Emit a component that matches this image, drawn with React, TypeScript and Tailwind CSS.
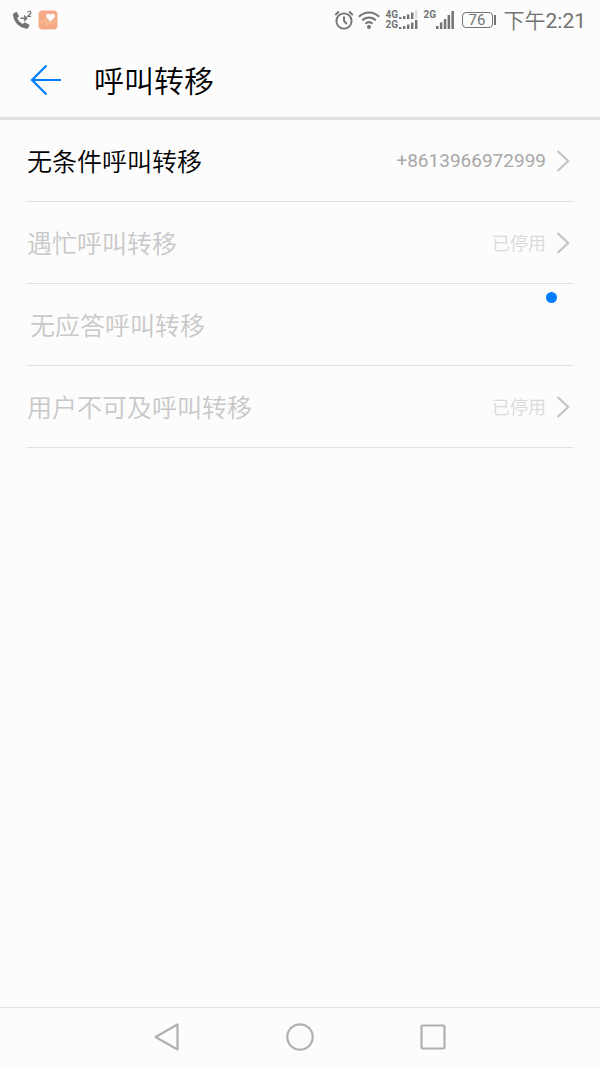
import { useState } from "react";

type ForwardingItem = {
  id: string;
  label: string;
  value?: string;
  enabled?: boolean;
  loading?: boolean;
};

const items: ForwardingItem[] = [
  { id: "always", label: "无条件呼叫转移", value: "+8613966972999", enabled: true },
  { id: "busy", label: "遇忙呼叫转移", value: "已停用" },
  { id: "no-answer", label: "无应答呼叫转移", loading: true },
  { id: "unreachable", label: "用户不可及呼叫转移", value: "已停用" },
];

export default function App() {
  const [selected, setSelected] = useState<string | null>(null);

  return (
    <div className="flex min-h-screen flex-col bg-[#fcfcfc] font-['Roboto','Noto_Sans_CJK_SC',sans-serif] font-[350] text-black">
      <StatusBar />

      <header className="flex h-20 items-center gap-8 border-b-3 border-[#e0e0e0] pt-0.5 pl-[30px]">
        <button type="button" aria-label="返回" className="cursor-pointer">
          <svg width="32" height="32" viewBox="0 0 32 32" fill="none" stroke="#007dff" strokeWidth="2.2">
            <path d="M16.5 1.5 2 16l14.5 14.5M2 16h29" />
          </svg>
        </button>
        <h1 className="pt-1 text-[30px] leading-10">呼叫转移</h1>
      </header>

      <main className="flex-1 px-[27px]">
        <ul>
          {items.map((item) => (
            <li key={item.id} className="border-b border-[#e0e0e0]">
              <ForwardingRow
                item={item}
                selected={selected === item.id}
                onSelect={() => setSelected(item.id)}
              />
            </li>
          ))}
        </ul>
      </main>

      <NavigationBar />
    </div>
  );
}

function ForwardingRow({
  item,
  selected,
  onSelect,
}: {
  item: ForwardingItem;
  selected: boolean;
  onSelect: () => void;
}) {
  if (item.loading) {
    return (
      <div className="flex h-[81px] items-center justify-between pr-4 pl-[3px]">
        <span className="pt-1 text-[25px] leading-9 text-[#c8c8c8]">{item.label}</span>
        <span role="status" aria-label="加载中" className="mt-2 size-[11px] self-start rounded-full bg-[#007dff]" />
      </div>
    );
  }

  return (
    <button
      type="button"
      disabled={!item.enabled}
      aria-pressed={selected}
      onClick={onSelect}
      className="flex h-[81px] w-full items-center justify-between enabled:cursor-pointer"
    >
      <span className={`pt-1 text-[25px] leading-9 ${item.enabled ? "text-black" : "text-[#c8c8c8]"}`}>
        {item.label}
      </span>
      <span className="flex items-center gap-2.5 pr-[3px]">
        <span
          className={
            item.enabled
              ? "text-[19px] leading-7 font-normal text-[#a8a8a8]"
              : "pt-0.5 text-lg leading-7 text-[#dadada]"
          }
        >
          {item.value}
        </span>
        <svg width="14" height="22" viewBox="0 0 14 22" fill="none" stroke="#c4c4c4" strokeWidth="2.2">
          <path d="m1.5 1 10.7 10L1.5 21" />
        </svg>
      </span>
    </button>
  );
}

function StatusBar() {
  return (
    <div className="flex h-10 items-center justify-between pr-3.5 pl-3 text-[#737373]">
      <div className="flex items-center gap-1.5">
        <svg width="20" height="20" viewBox="0 0 20 20">
          <path
            fill="currentColor"
            d="M1.6 3.4 4 2.1c.5-.2.9-.1 1.1.4l1.7 3.2c.2.5.1.9-.3 1.2L5.2 7.9c.9 2.5 2.9 4.700 5.500 6l1.400-1.200c.4-.3.8-.3 1.200-.1l3.600 1.900c.5.3.6.7.4 1.200l-1.200 2.200c-.4.600-.9.900-1.700.8C7.500 18 1.700 12 1 5.100c-.1-.8 0-1.300.6-1.700Z"
          />
          <path d="M8.5 8.2h6M12 5.500l2.700 2.700-2.700 2.700" fill="none" stroke="currentColor" strokeWidth="1.5" />
          <path d="M15.9 2.600c.1-1.800 2.900-1.900 2.900.1 0 1-1.700 1.900-2.900 3.600h3.200" fill="none" stroke="currentColor" strokeWidth="1.2" />
        </svg>
        <svg width="20" height="20" viewBox="0 0 20 20">
          <rect x=".5" y=".5" width="19" height="19" rx="4" fill="#f6aa88" />
          <path d="M1.5 12.500h4L7 9l2.500 6 2-4.500 1.500 3 1.500-1.500H18" fill="none" stroke="#f9d08f" strokeWidth="0.7" />
          <path d="M12.500 11.500C9.600 9.200 8.200 8 8.200 6.100c0-2.500 3.100-3.100 4.300-1 1.200-2.100 4.300-1.500 4.300 1 0 1.900-1.400 3.100-4.300 5.400Z" fill="#fff" />
        </svg>
      </div>

      <div className="flex items-center">
        <svg width="20" height="20" viewBox="0 0 20 20" fill="none" stroke="currentColor" strokeWidth="1.9">
          <circle cx="10" cy="11" r="7.6" />
          <path d="M10 6.500V11l2.800 3M1.200 5 5 1.500M15 1.500 18.800 5" />
        </svg>
        <svg className="ml-1" width="22" height="20" viewBox="0 0 22 20" fill="none" stroke="currentColor" strokeWidth="2">
          <path d="M.8 6.800c5.900-5.900 14.500-5.900 20.400 0M4.200 10.400c3.900-3.900 9.700-3.900 13.600 0M7.500 13.700c2.200-2 4.800-2 7 0" />
          <circle cx="11" cy="17" r="2" fill="currentColor" stroke="none" />
        </svg>
        <div className="ml-1.5 flex flex-col text-[10px] leading-[10px] font-bold">
          <div className="flex items-center">
            <span className="w-3">4G</span>
            <SmallSignal weak />
          </div>
          <div className="flex items-center">
            <span className="w-3">2G</span>
            <SmallSignal />
          </div>
        </div>
        <div className="ml-1.5 flex h-5 items-start">
          <span className="w-3 text-[10px] leading-[10px] font-bold">2G</span>
          <svg width="18" height="20" viewBox="0 0 18 20" fill="currentColor">
            <path d="M0 16h2.500v3H0zM3.900 12.500h2.500V19H3.900zM7.800 9h2.500v10H7.800zM11.600 5h2.500v14h-2.500zM15.400 1h2.500v18h-2.500z" />
          </svg>
        </div>
        <div className="ml-2 flex items-center gap-px">
          <span className="flex h-4 w-[31px] items-center justify-center rounded border border-current text-[15px] leading-4 font-normal">
            76
          </span>
          <span className="h-2.5 w-0.5 bg-current" />
        </div>
        <time className="ml-2 pt-0.5 text-[21px] leading-7 font-normal">
          <span className="font-[350]">下午</span>2:21
        </time>
      </div>
    </div>
  );
}

function SmallSignal({ weak = false }: { weak?: boolean }) {
  return (
    <svg width="20" height="10" viewBox="0 0 20 10" fill="currentColor">
      <path d="M1 7h2.400v2H1zM5 6h2.400v3H5zM9 4.500h2.400V9H9zM13 2.500h2.400V9H13z" />
      <path d="M17 0h2.400v9H17z" className={weak ? "text-[#dddddd]" : ""} fill="currentColor" />
    </svg>
  );
}

function NavigationBar() {
  return (
    <nav className="flex h-[60px] items-center justify-center gap-[105px] border-t border-[#e0e0e0] pb-0.5 text-[#b0b0b0]">
      <button type="button" aria-label="后退" className="cursor-pointer">
        <svg width="28" height="28" viewBox="0 0 28 28" fill="none" stroke="currentColor" strokeWidth="2.2" strokeLinejoin="round">
          <path d="M24.500 1.500v25L2.500 14Z" />
        </svg>
      </button>
      <button type="button" aria-label="主屏幕" className="cursor-pointer">
        <svg width="28" height="28" viewBox="0 0 28 28" fill="none" stroke="currentColor" strokeWidth="2.2">
          <circle cx="14" cy="14" r="12.7" />
        </svg>
      </button>
      <button type="button" aria-label="最近任务" className="cursor-pointer">
        <svg width="28" height="28" viewBox="0 0 28 28" fill="none" stroke="currentColor" strokeWidth="2.2">
          <rect x="2.5" y="2.5" width="23" height="23" rx="1" />
        </svg>
      </button>
    </nav>
  );
}
